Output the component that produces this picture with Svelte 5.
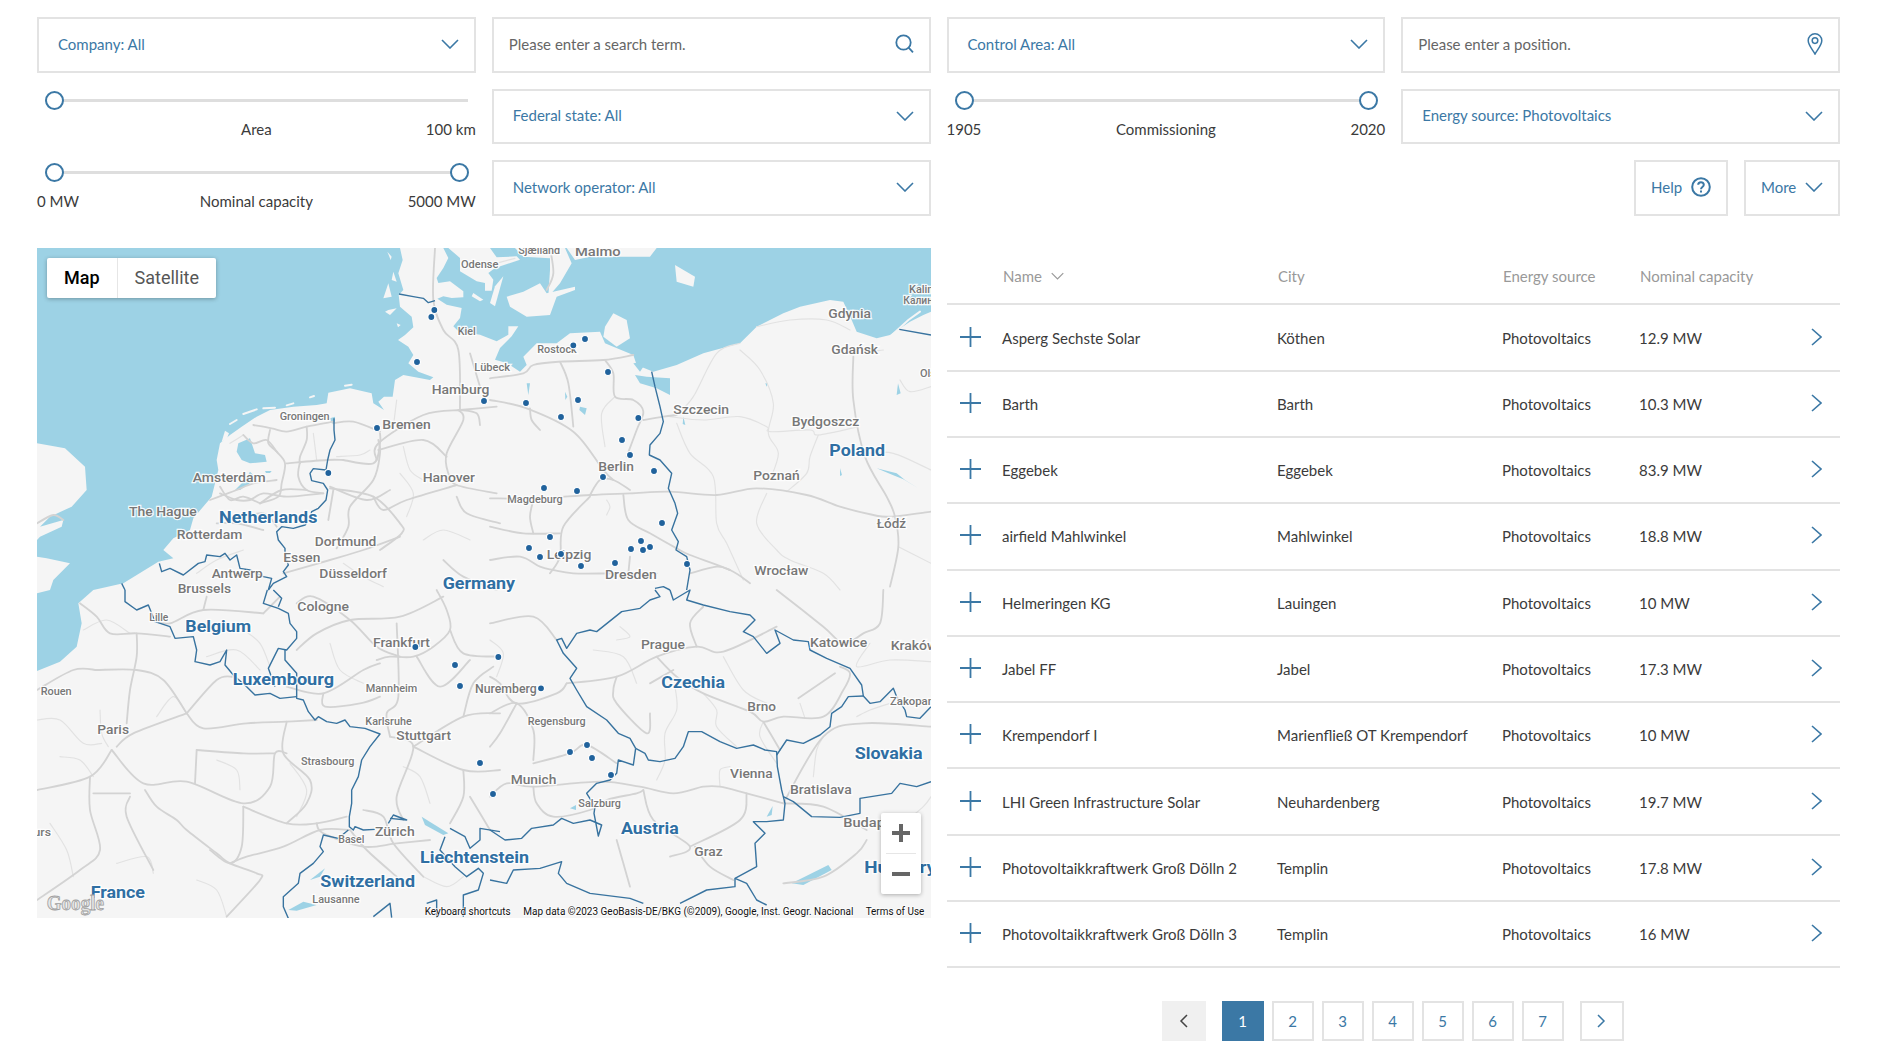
<script>
  // plant register: filters, map and table. Map coordinates are 3x page pixels.
  const plants = [
    ["Asperg Sechste Solar", "Köthen", "12.9 MW"],
    ["Barth", "Barth", "10.3 MW"],
    ["Eggebek", "Eggebek", "83.9 MW"],
    ["airfield Mahlwinkel", "Mahlwinkel", "18.8 MW"],
    ["Helmeringen KG", "Lauingen", "10 MW"],
    ["Jabel FF", "Jabel", "17.3 MW"],
    ["Krempendorf I", "Marienfließ OT Krempendorf", "10 MW"],
    ["LHI Green Infrastructure Solar", "Neuhardenberg", "19.7 MW"],
    ["Photovoltaikkraftwerk Groß Dölln 2", "Templin", "17.8 MW"],
    ["Photovoltaikkraftwerk Groß Dölln 3", "Templin", "16 MW"]
  ]
  const pages = [1, 2, 3, 4, 5, 6, 7]

  // catmull-rom through the points, so roads don't look like straight sticks
  function smooth(line) {
    const p = line.split(" ").map((s) => s.split(",").map(Number))
    let d = `M${p[0][0]} ${p[0][1]}`
    for (let i = 0; i < p.length - 1; i++) {
      const a = p[i - 1] || p[i]
      const b = p[i]
      const c = p[i + 1]
      const e = p[i + 2] || c
      d += `C${b[0] + (c[0] - a[0]) / 6} ${b[1] + (c[1] - a[1]) / 6} ${c[0] - (e[0] - b[0]) / 6} ${c[1] - (e[1] - b[1]) / 6} ${c[0]} ${c[1]}`
    }
    return d
  }

  const islands = [
    "21,610 105,625 165,680 170,750 125,800 60,830 30,860 100,840 95,860 30,890 21,900",
    "21,950 50,955 120,970 70,1020 60,1050 21,1060",
    "575,605 585,572 597,580 590,598",
    "1072,35 1085,50 1082,60",
    "1090,95 1100,125 1085,120",
    "1075,130 1060,175 1085,170",
    "1075,210 1100,205 1080,225 1065,215",
    "1100,250 1112,255 1104,262",
    "1610,24 1635,60 1680,50 1860,50 1880,24",
    "1455,24 1480,50 1560,55 1560,90 1555,170 1590,130 1625,70 1605,24",
    "1430,170 1480,155 1530,130 1550,160 1635,140 1635,150 1580,170 1560,225 1490,230 1440,200",
    "1255,24 1380,24 1400,52 1460,49 1470,59 1395,84 1375,99 1390,119 1385,152 1365,152 1365,129 1340,124 1290,94 1290,54",
    "1420,109 1395,199 1380,189 1395,139",
    "1330,159 1360,179 1350,184 1325,169",
    "1725,260 1750,220 1790,240 1800,295 1760,320 1720,290",
    "1935,75 1995,110 1990,140 1940,125"
  ]
  const spits = [
    "640,522 680,508", "700,505 735,503", "770,496 790,490", "840,472 852,468",
    "945,437 965,434", "600,552 620,540", "2580,290 2635,240 2670,215"
  ]
  const lakes = [
    "1815,405 1850,410 1920,415 1920,465 1880,445 1830,430",
    "1810,370 1850,365 1830,395",
    "625,610 660,595 665,610 675,640 705,645 710,665 660,670 635,660 620,635",
    "615,750 645,720 660,695 680,715 660,730 630,750",
    "705,693 725,693 720,699 708,699",
    "900,535 915,530 915,550 905,550",
    "1650,500 1670,505 1665,525 1648,510",
    "1490,430 1500,430 1495,465",
    "1605,455 1612,470 1606,480",
    "1960,530 1966,555 1958,552",
    "2206,430 2214,430 2210,440",
    "2604,430 2612,460 2600,465",
    "2430,685 2436,705 2430,708",
    "1175,1730 1255,1780 1240,1785 1185,1755",
    "775,2010 820,1985 860,1995 800,2012",
    "840,1920 885,1885 870,1910",
    "2285,1930 2395,1875 2405,1890 2320,1935",
    "2210,1730 2228,1698 2225,1725",
    "1620,1705 1638,1695 1638,1710",
    "2540,685 2600,700 2625,720 2665,745 2620,718 2590,706"
  ]

  const roadSets = [
    { dx: 0, dy: 0, main: [
      "1285,510 1300,540 1250,640 1255,700 1280,735 1400,760",
      "1045,600 1050,640 1030,720 960,800 955,860 920,925",
      "1290,510 1180,525 1045,610 1040,660",
      "1045,630 1180,600 1250,650",
      "900,745 1030,770 1110,850 1115,880 1050,930",
      "1030,770 1060,810 1130,780 1280,735",
      "570,760 620,780 660,780 700,760 770,770 880,760",
      "610,840 700,820 740,860",
      "560,850 620,850 700,870",
      "760,1000 900,960 1000,930 1110,890",
      "1240,960 1300,1010 1400,1050",
      "1280,770 1310,820 1410,850",
      "1290,510 1400,500",
      "1290,510 1285,330 1240,270 1210,180 1215,24",
      "1320,340 1350,440",
      "1290,510 1340,520 1350,555",
      "21,850 70,825 100,840"
    ], thin: [
      "1110,700 1150,760 1130,830",
      "500,1000 560,960 640,930",
      "1180,900 1240,870 1320,900",
      "940,970 1000,1010 1060,1040",
      "1120,620 1140,690 1180,720",
      "1090,560 1100,480"
    ] },
    { dx: 540, dy: 480, main: [
      "130,75 185,85 230,95 290,80 370,65",
      "180,90 175,130 200,155 225,190 215,250 205,290 150,310",
      "290,80 290,120 270,170 270,190",
      "230,190 350,180 400,180",
      "370,70 430,65 510,95",
      "100,105 130,130 170,120 200,155",
      "270,185 265,230 290,270 340,280",
      "150,310 215,270 290,270",
      "0,300 40,285 80,270 130,250 200,240",
      "30,260 60,300 100,290 150,310",
      "400,180 490,190 510,130 510,100",
      "360,260 470,300 540,270",
      "370,270 355,360"
    ], thin: [
      "310,100 320,180",
      "380,170 450,165 480,150",
      "60,130 100,105"
    ] },
    { dx: 1380, dy: 0, main: [
      "0,415 100,400 130,375 210,365 340,360 430,345",
      "210,365 235,430 250,560",
      "0,480 110,505 250,575 340,690 370,720",
      "120,505 125,540 150,570",
      "345,360 370,400 375,470 430,480 460,515 440,570 410,650",
      "460,540 520,530 560,525",
      "0,775 130,775 300,765 420,760 540,755 680,765 800,745 950,765 1050,800 1150,825 1200,830 1323,815",
      "300,770 220,860 210,950 180,1000",
      "400,765 415,840 480,880 560,925 600,945 720,990 780,1030",
      "300,765 330,720 370,720 420,750",
      "130,780 120,830 130,880",
      "0,860 100,880 210,880",
      "0,960 90,950 150,980 190,990 250,1000 370,1000 500,1000",
      "420,950 415,1000",
      "1090,350 1090,480 1125,650 1190,770 1215,830 1225,920 1200,1040",
      "600,1000 680,980 720,990",
      "180,24 190,100 170,150"
    ], thin: [
      "375,470 335,520 345,620",
      "560,525 610,470 680,340 750,310",
      "750,330 810,390 850,490 835,580 865,640 840,720",
      "540,530 640,540 750,530 830,560 840,575 960,570 985,585 1105,560",
      "985,585 960,650 950,700 890,755",
      "560,550 600,640 670,710 680,850 710,910 760,1020",
      "830,760 800,850 860,930 900,960 1000,1000 1050,1050",
      "1230,420 1260,455 1323,440",
      "800,260 900,240 1010,240 1080,270",
      "1100,340 1180,330",
      "1135,640 1210,640 1323,690",
      "1225,920 1323,970",
      "0,75 75,55",
      "350,780 360,800 350,825"
    ] },
    { dx: 0, dy: 1050, main: [
      "150,40 200,80 240,130 320,130 420,140",
      "320,130 320,200 300,300 290,400",
      "200,240 320,240 400,270 470,370",
      "470,370 560,270 610,260",
      "21,300 130,240 200,240",
      "470,370 520,415 650,400 770,395 860,390",
      "470,370 310,430 260,470",
      "245,480 340,580 470,575 640,640 720,590 735,490 770,490",
      "21,600 180,560 245,480",
      "180,560 180,660 210,780 150,840 21,930",
      "300,620 290,680 370,840",
      "300,610 190,610",
      "345,600 380,650 440,690 470,720 560,790 600,820 680,850 690,870 590,980",
      "640,650 635,770 600,820 540,780",
      "640,650 770,700 860,700 950,680",
      "500,480 495,580",
      "500,480 640,490 735,490",
      "600,820 650,800 760,770 870,720 960,720",
      "770,395 760,490 840,570 830,640 770,700",
      "700,70 520,60 420,100 370,90",
      "520,60 530,20",
      "700,70 750,20",
      "800,180 860,130 960,90 1110,80 1240,20",
      "800,40 850,20 960,90 1040,170 1110,200",
      "1040,210 1080,200 1150,200 1210,170 1260,120 1250,60 1220,0",
      "1100,100 1105,320 1070,370 1080,440",
      "1260,120 1300,190 1410,200",
      "1160,200 1230,290 1320,210",
      "880,310 885,350 990,340 1050,320",
      "770,290 880,310 1000,240 1050,220",
      "1080,440 1150,470 1100,620 1120,690",
      "1150,470 1300,380 1410,370",
      "1300,380 1330,280 1390,230",
      "1150,470 1300,540 1410,540",
      "1300,540 1300,620 1260,700",
      "1320,620 1380,720",
      "860,700 880,730 1000,770 1100,760 1200,750",
      "960,720 1010,780 1100,860",
      "1000,660 1060,680 1090,760 1180,860"
    ], thin: [
      "210,360 215,430 235,470",
      "21,390 90,390 160,460 215,460",
      "560,510 620,540 630,600",
      "780,520 830,600 800,680",
      "60,700 110,780 130,860",
      "380,380 430,320 470,370",
      "500,870 560,900 590,980",
      "260,820 350,800 370,850",
      "1180,860 1250,890 1300,860",
      "1120,530 1170,560 1200,640",
      "160,120 230,90 300,130",
      "530,200 620,180 690,240",
      "640,120 690,160 720,230",
      "900,160 930,240 1000,280",
      "90,500 150,510 190,560"
    ] },
    { dx: 1380, dy: 1050, main: [
      "0,100 130,80 200,150",
      "230,280 380,260 500,200 620,170 700,185 860,110",
      "500,200 560,260 640,310 780,365 820,395 880,380 1000,380 1060,300 1080,250 1050,230",
      "620,170 600,100 640,50",
      "380,260 370,300 380,340 470,430 480,370",
      "820,395 870,480",
      "0,370 80,340 130,420 130,510",
      "80,340 30,430 0,470",
      "0,260 30,280 80,340 200,310 230,280",
      "130,520 240,490 290,465 380,520",
      "0,620 50,580 130,590 330,575 450,590 550,610 640,590 690,590 770,610 880,640",
      "130,590 140,640 190,680 300,660 350,630 440,610 460,600",
      "460,600 490,690 600,770 540,800",
      "600,770 750,690 770,610",
      "615,770 660,830 730,870",
      "380,750 400,820 420,890",
      "880,640 1000,650 1130,720",
      "1130,750 1100,790 1000,860 880,880",
      "880,640 1000,440 1120,400 1323,410",
      "860,0 1000,110 1060,160 1120,130 1170,100 1180,0",
      "925,325 1035,250",
      "550,240 480,280"
    ], thin: [
      "555,290 560,360 525,430 525,510 500,570",
      "640,310 680,360 680,410 740,470",
      "820,395 810,440 860,520",
      "970,560 980,480 1000,440",
      "1100,380 1140,360 1200,340",
      "1140,160 1100,230 1200,210 1323,215",
      "390,110 420,140 380,150",
      "690,590 690,540 720,530",
      "930,340 945,385",
      "1240,700 1300,650 1323,620",
      "0,150 40,190 20,260",
      "310,180 400,200 440,280",
      "700,200 760,300 830,340"
    ] }
  ]

  const borderSets = [
    { dx: 0, dy: 0, lines: [
      "1107,162 1150,170 1180,175 1195,188 1215,182",
      "912,535 912,570 915,600 900,630 893,660 888,690 850,686 840,700 845,722 880,730 893,750 888,780 865,805 845,815 840,835 825,855 790,865 755,860 740,875 745,900 765,925 765,945 775,975 760,995 770,1010 730,1030 715,1050",
      "388,970 395,995 420,985 460,1005 505,970 525,965 530,945 570,950 585,940 600,960 620,945 630,985 660,990 700,1010 725,1015 715,1050",
      "275,1030 285,1050"
    ] },
    { dx: 0, dy: 1050, lines: [
      "712,0 700,40 745,55 775,70 780,100 800,125 800,145 770,180 745,175 715,235 735,290",
      "730,0 755,25 745,50",
      "765,180 765,210 800,250 800,325 820,330 835,365 855,390 865,380 890,395 920,400 945,390 960,410 1005,415 1050,432 1020,470 995,510 985,560 965,600 965,640 958,680 958,710 970,720 975,710 1000,720 1035,718",
      "955,720 925,745 880,735 870,770 880,785 850,820 810,850 805,880 760,920 760,950 775,985",
      "285,0 285,35 320,60 355,45 375,95 420,110 435,145 490,140 500,180 495,215 540,225 570,215 590,180 585,225 610,255 650,290 675,315 720,310 750,325 800,320",
      "1075,700 1090,675 1130,690 1080,685",
      "1245,740 1230,780 1275,830 1310,860 1345,835 1360,850 1345,900 1300,915 1300,980",
      "1260,715 1305,740 1320,775 1350,750 1350,715 1410,725",
      "1030,980 1080,940 1085,983",
      "1190,940 1220,930 1220,983"
    ] },
    { dx: 1380, dy: 0, lines: [
      "485,395 495,440 510,500 520,545 510,580 480,615 478,645 510,660 545,700 535,745 555,790 563,820 545,870 565,905 558,930 590,950 600,990 590,1050",
      "495,1045 520,1040 540,1050",
      "1228,268 1323,285"
    ] },
    { dx: 1380, dy: 1050, lines: [
      "0,720 45,750 95,745 125,715 190,705 215,685 250,700 300,690 335,705 325,738 312,670 315,650 290,610 320,580 360,570 380,550 385,510 430,525 437,475",
      "437,475 420,445 385,430 350,390 290,350 260,300 240,265 260,235 220,190 200,150 215,145 230,175 260,130 300,120 320,125 395,65 450,55 480,30 510,20 495,0",
      "540,0 550,30 600,0 590,30 640,45 720,65 780,75 795,90 760,125 790,140 830,190 870,160 855,120 910,150 955,155 960,180 1010,205 1080,235 1115,285 1120,318 1140,340 1170,335 1210,295 1220,320 1245,360 1250,380 1290,385 1323,350",
      "1120,318 1075,320 1055,350 1025,370 1020,410 990,435 940,460 890,450 860,495",
      "437,475 465,490 475,510 510,515 555,505 580,470 595,425 635,425 690,455 740,475 790,465 825,480 860,485 862,530 875,600 880,620 885,640 880,690 830,695 790,695 825,730 795,760 800,830 735,865 735,890 650,900 570,940",
      "880,620 910,635 965,680 1050,682 1110,670 1110,625 1205,610 1230,580 1280,590 1323,575",
      "0,870 50,880 70,840 150,835 215,815 205,850 230,880 300,910 420,925 460,940",
      "735,865 770,880 800,930 830,945"
    ] }
  ]

  // name, x, baseline, width, size, country?
  const labels = [
    ["Odense", 1293, 85, 112, 30], ["Kiel", 1283, 285, 54, 30], ["Lübeck", 1333, 392, 107, 30],
    ["Hamburg", 1205, 462, 173, 38], ["Groningen", 749, 540, 150, 30], ["Bremen", 1057, 568, 145, 38],
    ["Amsterdam", 488, 727, 219, 38], ["Hanover", 1178, 727, 157, 38], ["The Hague", 297, 829, 203, 38],
    ["Netherlands", 567, 850, 295, 48, true], ["Rotterdam", 440, 896, 197, 38], ["Dortmund", 854, 917, 185, 38],
    ["Essen", 760, 966, 111, 38], ["Antwerp", 545, 1015, 153, 38], ["Düsseldorf", 868, 1014, 203, 38],
    ["Germany", 1238, 1046, 217, 48, true], ["Brussels", 443, 1060, 160, 38], ["Lille", 358, 1142, 57, 30],
    ["Belgium", 466, 1175, 197, 48, true], ["Cologne", 802, 1112, 155, 38], ["Frankfurt", 1029, 1220, 171, 38],
    ["Luxembourg", 608, 1335, 304, 48, true], ["Mannheim", 1007, 1355, 155, 30], ["Rouen", 32, 1365, 93, 30],
    ["Nuremberg", 1335, 1360, 185, 38], ["Karlsruhe", 1006, 1455, 139, 30], ["Stuttgart", 1099, 1500, 164, 38],
    ["Paris", 202, 1482, 95, 38], ["Strasbourg", 813, 1575, 160, 30], ["Tours", -30, 1787, 93, 30],
    ["Zürich", 1035, 1787, 119, 38], ["Basel", 925, 1810, 78, 30], ["Liechtenstein", 1170, 1870, 327, 48, true],
    ["Switzerland", 871, 1940, 284, 48, true], ["France", 182, 1974, 163, 48, true], ["Lausanne", 847, 1990, 142, 30],
    ["Sjælland", 1465, 42, 125, 30], ["Malmo", 1635, 48, 137, 38], ["Kaliningrad", 2637, 160, 165, 30],
    ["Калининград", 2620, 193, 190, 30], ["Gdynia", 2395, 235, 128, 38], ["Gdańsk", 2404, 343, 140, 38],
    ["Olsztyn", 2670, 412, 110, 30], ["Rostock", 1522, 340, 118, 30], ["Szczecin", 1930, 523, 167, 38],
    ["Bydgoszcz", 2285, 558, 203, 38], ["Poland", 2398, 647, 167, 48, true], ["Berlin", 1705, 692, 107, 38],
    ["Poznań", 2170, 720, 139, 38], ["Magdeburg", 1432, 788, 166, 30], ["Łódź", 2540, 863, 88, 38],
    ["Leipzig", 1550, 957, 134, 38], ["Dresden", 1725, 1018, 155, 38], ["Wrocław", 2173, 1005, 162, 38],
    ["Prague", 1833, 1227, 132, 38], ["Katowice", 2340, 1222, 172, 38], ["Kraków", 2582, 1230, 140, 38],
    ["Czechia", 1894, 1345, 191, 48, true], ["Zakopane", 2580, 1395, 150, 30], ["Brno", 2152, 1413, 86, 38],
    ["Regensburg", 1493, 1455, 174, 30], ["Slovakia", 2474, 1556, 204, 48, true], ["Vienna", 2100, 1615, 128, 38],
    ["Munich", 1442, 1633, 137, 38], ["Bratislava", 2280, 1663, 185, 36], ["Salzburg", 1645, 1700, 128, 30],
    ["Budapest", 2440, 1761, 185, 38], ["Austria", 1773, 1783, 173, 48, true], ["Graz", 1993, 1848, 85, 38],
    ["Hungary", 2503, 1900, 215, 48, true]
  ]

  const dots = [
    [1213, 210], [1204, 231], [1161, 366], [1362, 483], [1041, 564], [895, 699],
    [1665, 297], [1630, 316], [1734, 396], [1488, 489], [1644, 480], [1593, 531], [1825, 534],
    [1776, 600], [1800, 645], [1872, 693], [1719, 711], [1542, 744], [1641, 753], [1896, 849],
    [1560, 891], [1833, 903], [1860, 921], [1839, 930], [1803, 927], [1497, 924], [1530, 951],
    [1593, 942], [1755, 969], [1653, 978], [1971, 972],
    [1156, 1221], [1275, 1275], [1405, 1251], [1290, 1338], [1350, 1569], [1389, 1662],
    [1533, 1345], [1671, 1515], [1620, 1536], [1686, 1554], [1743, 1605]
  ]
</script>

{#snippet chevron(cls = "")}
  <svg class="chev {cls}" viewBox="0 0 18 10"><path d="M1 1l8 8 8-8" /></svg>
{/snippet}

{#snippet slider(left, title, right, twoThumbs)}
  <div class="slider">
    <div class="rail">
      <span class="thumb start"></span>
      {#if twoThumbs}<span class="thumb end"></span>{/if}
    </div>
    <div class="slider-labels">
      <span>{left}</span>
      <span>{title}</span>
      <span class="right">{right}</span>
    </div>
  </div>
{/snippet}

<div class="page">
  <section class="filters">
    <button class="box select">Company: All {@render chevron()}</button>
    <div class="box input">
      <span>Please enter a search term.</span>
      <svg class="ico" viewBox="0 0 19 19"><circle cx="8.5" cy="8.5" r="7.2" /><path d="M13.6 13.6l4.4 4.8" /></svg>
    </div>
    <button class="box select">Control Area: All {@render chevron()}</button>
    <div class="box input">
      <span>Please enter a position.</span>
      <svg class="ico pin" viewBox="0 0 16 22"><path d="M8 21C5 16 1.2 12 1.2 7.6a6.8 6.8 0 0 1 13.6 0C14.8 12 11 16 8 21z" /><circle cx="8" cy="7.6" r="2.8" /></svg>
    </div>

    {@render slider("", "Area", "100 km", false)}
    <button class="box select wide">Federal state: All {@render chevron()}</button>
    {@render slider("1905", "Commissioning", "2020", true)}
    <button class="box select wide">Energy source: Photovoltaics {@render chevron()}</button>

    {@render slider("0 MW", "Nominal capacity", "5000 MW", true)}
    <button class="box select wide">Network operator: All {@render chevron()}</button>
    <div class="actions">
      <button class="box small help">
        Help
        <svg class="ico q" viewBox="0 0 20 20"><circle cx="10" cy="10" r="8.8" /><path d="M7.2 7.8c0-3.5 5.6-3.5 5.6 0 0 2.3-2.8 2.2-2.8 4.4" /><path d="M10 13.4v2" /></svg>
      </button>
      <button class="box small more">More {@render chevron()}</button>
    </div>
  </section>

  <section class="content">
    <div class="map">
      <svg class="map-art" viewBox="21 24 2682 2010" preserveAspectRatio="none">
        <rect x="21" y="24" width="2682" height="2010" fill="#f5f5f5" />
        <polygon class="water" points="21,24 1110,24 1118,60 1105,100 1120,150 1106,165 1110,200 1145,230 1150,262 1125,285 1104,300 1135,320 1150,345 1135,370 1165,395 1210,412 1200,420 1120,405 1095,420 1088,470 1062,470 1045,485 1062,510 1030,490 1025,460 960,445 895,458 890,490 860,495 790,500 720,510 680,530 635,560 600,585 570,610 560,660 565,690 545,770 490,835 480,870 430,895 400,930 430,955 385,965 280,1030 190,1050 145,1090 155,1150 140,1220 90,1265 21,1293" />
        <polygon class="water" points="1240,24 1255,54 1240,84 1220,114 1225,129 1260,124 1300,154 1300,172 1265,174 1240,169 1222,176 1250,194 1295,204 1290,234 1270,259 1285,274 1350,284 1400,304 1435,284 1435,259 1465,259 1445,289 1410,324 1395,359 1430,369 1470,395 1490,375 1480,350 1520,310 1580,310 1620,280 1710,275 1725,310 1750,320 1810,345 1820,375 1870,395 1940,375 2020,340 2130,310 2180,260 2260,220 2310,200 2400,180 2440,185 2465,240 2480,275 2540,295 2580,285 2640,245 2680,225 2703,215 2703,24" />
        {#each islands as pts}<polygon class="land" points={pts} />{/each}
        {#each spits as pts}<polyline class="spit" points={pts} />{/each}
        {#each lakes as pts}<polygon class="water" points={pts} />{/each}

        {#each roadSets as set}
          <g transform="translate({set.dx},{set.dy})">
            {#each set.thin as line}<path class="road thin" d={smooth(line)} />{/each}
            {#each set.main as line}<path class="road" d={smooth(line)} />{/each}
          </g>
        {/each}
        {#each borderSets as set}
          <g transform="translate({set.dx},{set.dy})">
            {#each set.lines as pts}<polyline class="border" points={pts} />{/each}
          </g>
        {/each}

        {#each labels as [name, x, y, w, size, country]}
          <text class="label" class:country {x} {y} font-size={size} textLength={w} lengthAdjust="spacingAndGlyphs">{name}</text>
        {/each}
        {#each dots as [cx, cy]}
          <circle class="dot" {cx} {cy} r="10.5" />
        {/each}

        <text class="google" x="50" y="2010" font-size="62" textLength="172" lengthAdjust="spacingAndGlyphs">Google</text>
        <text class="legal" x="1184" y="2025" textLength="258" lengthAdjust="spacingAndGlyphs">Keyboard shortcuts</text>
        <text class="legal" x="1480" y="2025" textLength="990" lengthAdjust="spacingAndGlyphs">Map data ©2023 GeoBasis-DE/BKG (©2009), Google, Inst. Geogr. Nacional</text>
        <text class="legal" x="2507" y="2025" textLength="176" lengthAdjust="spacingAndGlyphs">Terms of Use</text>
      </svg>

      <div class="map-type">
        <button class="on">Map</button>
        <button>Satellite</button>
      </div>
      <div class="zoom">
        <button aria-label="Zoom in"><svg viewBox="0 0 18 18"><path d="M0 9h18M9 0v18" /></svg></button>
        <span></span>
        <button aria-label="Zoom out"><svg viewBox="0 0 18 18"><path d="M0 9h18" /></svg></button>
      </div>
    </div>

    <div class="list">
      <div class="row head">
        <span></span>
        <span class="sort">Name <svg class="chev thin-chev" viewBox="0 0 18 10"><path d="M1 1l8 8 8-8" /></svg></span>
        <span>City</span>
        <span>Energy source</span>
        <span>Nominal capacity</span>
      </div>
      {#each plants as [name, city, cap]}
        <div class="row">
          <svg class="plus" viewBox="0 0 21 20"><path d="M0 10h21M10.5 0v20" /></svg>
          <span>{name}</span>
          <span>{city}</span>
          <span>Photovoltaics</span>
          <span>{cap}</span>
          <svg class="go" viewBox="0 0 11 18"><path d="M1 1l9 8-9 8" /></svg>
        </div>
      {/each}

      <nav class="pager">
        <button class="step off" aria-label="Previous"><svg viewBox="0 0 9 14"><path d="M8 1L2 7l6 6" /></svg></button>
        <div class="nums">
          {#each pages as p}
            <button class:active={p === 1}>{p}</button>
          {/each}
        </div>
        <button class="step" aria-label="Next"><svg viewBox="0 0 9 14"><path d="M1 1l6 6-6 6" /></svg></button>
      </nav>
    </div>
  </section>
</div>

<style>
  :global(body) {
    background: #fff;
    font-family: Lato, "Open Sans", sans-serif;
    font-size: 15px;
    color: #3b3b3b;
  }
  button {
    font: inherit;
    background: #fff;
    cursor: pointer;
  }
  .page {
    padding: 17.2px 42px 0 37px;
  }
  .filters {
    display: grid;
    grid-template-columns: repeat(4, 1fr);
    grid-auto-rows: 55.5px;
    gap: 16px;
  }
  .box {
    display: flex;
    align-items: center;
    justify-content: space-between;
    border: 2px solid #e3e3e3;
    box-sizing: border-box;
    height: 100%;
    color: #3b78a5;
  }
  .select {
    padding: 0 15px 2px 19px;
    text-align: left;
  }
  .select :global(svg) {
    margin-top: 1px;
  }
  .input {
    padding: 0 15px 2px;
    color: #666;
  }
  .chev {
    width: 18px;
    height: 10px;
    flex: none;
  }
  .chev path {
    fill: none;
    stroke: #3b78a5;
    stroke-width: 1.6;
  }
  .ico {
    width: 19px;
    height: 19px;
    flex: none;
    fill: none;
    stroke: #3b78a5;
    stroke-width: 1.8;
  }
  .pin {
    width: 16px;
    height: 22px;
    stroke-width: 1.5;
  }

  .slider {
    padding-top: 2.4px;
  }
  .rail {
    position: relative;
    height: 19px;
    margin: 0 8px;
  }
  .rail::before {
    content: "";
    position: absolute;
    left: 0;
    right: 0;
    top: 8px;
    height: 3px;
    background: #dedede;
  }
  .thumb {
    position: absolute;
    top: 0;
    width: 19px;
    height: 19px;
    box-sizing: border-box;
    border: 2.5px solid #3b78a5;
    border-radius: 50%;
    background: #fff;
  }
  .thumb.start { left: 0; }
  .thumb.end { right: -1px; }
  .slider-labels {
    display: grid;
    grid-template-columns: 1fr auto 1fr;
    margin-top: 9.4px;
    line-height: 20px;
  }
  .slider-labels .right {
    text-align: right;
  }
  .actions {
    grid-column: 4;
    display: flex;
    justify-content: flex-end;
    gap: 16px;
  }
  .small {
    padding: 0 15px 2px;
  }
  .help {
    width: 94px;
    justify-content: flex-start;
    gap: 9px;
  }
  .help .q {
    width: 20px;
    height: 20px;
    stroke-width: 2;
  }
  .more { width: 96px; }

  .content {
    display: grid;
    grid-template-columns: 894px 893px;
    gap: 16px;
    margin-top: 32.3px;
  }
  .map {
    position: relative;
    height: 670px;
    overflow: hidden;
  }
  .map-art {
    display: block;
    width: 100%;
    height: 100%;
    font-family: Roboto, sans-serif;
  }
  .water { fill: #9dd2e5; }
  .land { fill: #f5f5f5; }
  .spit {
    fill: none;
    stroke: #f5f5f5;
    stroke-width: 6;
    stroke-linecap: round;
  }
  .road {
    fill: none;
    stroke: #d3d3d3;
    stroke-width: 5.5;
    stroke-linejoin: round;
    stroke-linecap: round;
  }
  .road.thin {
    stroke: #e2e2e2;
    stroke-width: 3.5;
  }
  .border {
    fill: none;
    stroke: #38739f;
    stroke-width: 4.2;
    stroke-linejoin: round;
  }
  .label {
    fill: #777;
    font-weight: 500;
    paint-order: stroke;
    stroke: #fff;
    stroke-width: 7;
    stroke-opacity: 0.9;
  }
  .label.country {
    fill: #2f6fa3;
    font-weight: 700;
  }
  .dot {
    fill: #20629c;
    stroke: #fff;
    stroke-width: 3.5;
  }
  .google {
    font-family: "Liberation Serif", serif;
    font-weight: 700;
    fill: #e6e6e6;
    stroke: #a0a0a0;
    stroke-width: 2.5;
  }
  .legal {
    font-size: 30px;
    fill: #111;
    paint-order: stroke;
    stroke: #fff;
    stroke-width: 5;
    stroke-opacity: 0.8;
  }
  .map-type {
    position: absolute;
    left: 10px;
    top: 10px;
    display: flex;
    height: 40px;
    background: #fff;
    border-radius: 2px;
    box-shadow: 0 1px 4px rgba(0, 0, 0, 0.3);
  }
  .map-type button {
    border: 0;
    padding: 0 17px;
    font-family: Roboto, sans-serif;
    font-size: 18px;
    color: #565656;
    background: transparent;
  }
  .map-type .on {
    color: #000;
    font-weight: 500;
    border-right: 1px solid #e6e6e6;
  }
  .zoom {
    position: absolute;
    right: 10px;
    top: 565px;
    width: 40px;
    height: 81px;
    background: #fff;
    border-radius: 2px;
    box-shadow: 0 1px 4px rgba(0, 0, 0, 0.3);
    display: flex;
    flex-direction: column;
    align-items: center;
  }
  .zoom button {
    border: 0;
    padding: 0;
    width: 40px;
    height: 40px;
    display: flex;
    align-items: center;
    justify-content: center;
    background: transparent;
  }
  .zoom span {
    width: 30px;
    height: 1px;
    background: #e6e6e6;
  }
  .zoom svg {
    width: 18px;
    height: 18px;
    fill: none;
    stroke: #666;
    stroke-width: 4;
  }

  .row {
    display: grid;
    grid-template-columns: 55px 275px 225px 137px 1fr 40px;
    align-items: center;
    height: 66.3px;
    box-sizing: border-box;
    border-bottom: 2px solid #e3e3e3;
  }
  .row.head {
    height: 57.4px;
    color: #999;
  }
  .row.head span {
    padding-left: 1px;
  }
  .sort {
    display: flex;
    align-items: center;
    gap: 9px;
  }
  .thin-chev {
    width: 13px;
    height: 8px;
  }
  .thin-chev path {
    stroke: #999;
  }
  .plus {
    width: 21px;
    height: 20px;
    margin: -2px 0 0 13px;
    fill: none;
    stroke: #3b78a5;
    stroke-width: 1.8;
  }
  .go {
    width: 11px;
    height: 18px;
    margin: -2px 0 0 11px;
    fill: none;
    stroke: #3b78a5;
    stroke-width: 1.6;
  }
  .pager {
    display: flex;
    justify-content: center;
    gap: 16px;
    margin-top: 32.5px;
    padding-right: 2px;
  }
  .nums {
    display: flex;
    gap: 8px;
  }
  .pager button {
    height: 40px;
    box-sizing: border-box;
    border: 2px solid #e3e3e3;
    color: #3b78a5;
    padding: 0;
  }
  .nums button {
    width: 42px;
  }
  .nums .active {
    background: #3b78a5;
    border-color: #3b78a5;
    color: #fff;
  }
  .step {
    width: 44px;
    display: flex;
    align-items: center;
    justify-content: center;
  }
  .step svg {
    width: 9px;
    height: 14px;
    fill: none;
    stroke: #3b78a5;
    stroke-width: 1.5;
  }
  .step.off {
    background: #f0f0f0;
    border-color: #f0f0f0;
  }
  .step.off svg {
    stroke: #444;
  }
</style>
